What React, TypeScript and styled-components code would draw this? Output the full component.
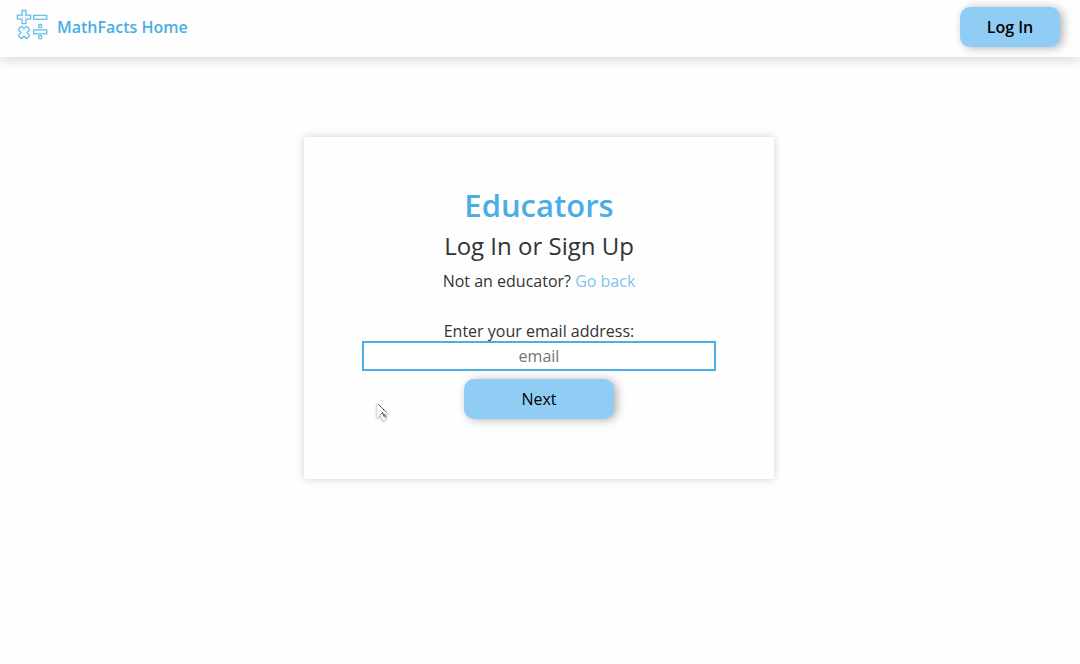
import React from "react";
import styled, { createGlobalStyle } from "styled-components";

const GlobalStyle = createGlobalStyle`
  * { box-sizing: border-box; }
  body {
    margin: 0;
    background: #fefefe;
    color: #333;
    font: 400 16px/24px "Open Sans", "Noto Sans", sans-serif;
  }
`;

const Header = styled.header`
  display: flex;
  align-items: center;
  justify-content: space-between;
  padding: 7px 20px 10px 16px;
  background: #fefefe;
  box-shadow: 0 4px 10px rgba(0, 0, 0, 0.14);
`;

const Brand = styled.a`
  display: flex;
  align-items: center;
  gap: 9px;
  color: #4aaee4;
  font-weight: 600;
  text-decoration: none;
`;

const Logo = styled.svg`
  width: 32px;
  height: 32px;
  margin-bottom: 4px;
  fill: #f2f9fd;
  stroke: #6bbdea;
  stroke-width: 1.3;
`;

const Button = styled.button<{ $width: number; $strong?: boolean }>`
  width: ${(p) => p.$width}px;
  height: 40px;
  padding: 0;
  border: 0;
  border-radius: 10px;
  background: #90cdf4;
  color: #000;
  font: inherit;
  font-weight: ${(p) => (p.$strong ? 600 : 400)};
  box-shadow: 3px 1px 10px rgba(0, 0, 0, 0.3);
  cursor: pointer;
`;

const Main = styled.main`
  display: flex;
  justify-content: center;
  padding: 80px 18px 80px 16px;
`;

const Card = styled.section`
  display: flex;
  flex-direction: column;
  align-items: center;
  width: 100%;
  max-width: 470px;
  padding: 44px 58px 60px;
  background: #fefefe;
  box-shadow: 0 0 8px rgba(0, 0, 0, 0.18);
  text-align: center;
`;

const Title = styled.h1`
  margin: 0;
  color: #4aaee4;
  font-size: 31px;
  line-height: 48px;
  font-weight: 600;
`;

const Subtitle = styled.h2`
  margin: 0;
  font-size: 24px;
  line-height: 34px;
  font-weight: 400;
`;

const Note = styled.p`
  margin: 6px 0 27px;
`;

const BackLink = styled.a`
  color: #80c4ea;
  text-decoration: none;
`;

const Form = styled.form`
  display: flex;
  flex-direction: column;
  align-items: center;
  width: 100%;
`;

const Label = styled.label`
  padding-top: 1px;
  line-height: 20px;
`;

const EmailInput = styled.input`
  width: 100%;
  height: 30px;
  margin: 0 0 8px;
  padding: 0;
  border: 2px solid #4aaee4;
  border-radius: 0;
  outline: 0;
  background: #fff;
  color: #333;
  font: inherit;
  text-align: center;

  &::placeholder {
    color: #757575;
    opacity: 1;
  }
`;

const Pointer = styled.svg`
  position: absolute;
  top: 402px;
  left: calc(50% - 164px);
  width: 14px;
  height: 20px;
  pointer-events: none;
  filter: drop-shadow(0 1px 1px rgba(0, 0, 0, 0.3));
`;

export default function App() {
  return (
    <>
      <GlobalStyle />
      <Header>
        <Brand href="#home">
          <Logo viewBox="0 0 32 32" aria-hidden="true">
            <path d="M6 1.500h4v4.600h4.600v4H10v4.600H6v-4.600H1.400v-4H6z" />
            <path d="M17.600 6.400h13.200v4H17.600z" />
            <path d="M4.600 17.800Q5.400 17 6.200 17.800L8 19.600l1.800-1.800Q10.600 17 11.400 17.800L13.200 19.600Q14 20.400 13.200 21.200L11 23.400l2.200 2.200Q14 26.400 13.200 27.200L11.400 29Q10.600 29.800 9.800 29L8 27.200l-1.800 1.800Q5.400 29.800 4.600 29L2.800 27.200Q2 26.400 2.800 25.600L5 23.400l-2.200-2.200Q2 20.400 2.800 19.600z" />
            <path d="M17.600 20.800h13.200v4H17.600z" />
            <circle cx="24.200" cy="17.200" r="1.700" />
            <circle cx="24.200" cy="28.200" r="1.700" />
          </Logo>
          MathFacts Home
        </Brand>
        <Button type="button" $width={100} $strong>Log In</Button>
      </Header>
      <Main>
        <Card>
          <Title>Educators</Title>
          <Subtitle>Log In or Sign Up</Subtitle>
          <Note>
            Not an educator? <BackLink href="#back">Go back</BackLink>
          </Note>
          <Form onSubmit={(e: React.FormEvent) => e.preventDefault()}>
            <Label htmlFor="email">Enter your email address:</Label>
            <EmailInput id="email" type="email" placeholder="email" />
            <Button type="submit" $width={150}>Next</Button>
          </Form>
        </Card>
      </Main>
      <Pointer viewBox="0 0 14 20" aria-hidden="true">
        <path d="M1 1v15l3.400-3 2.400 5.500 3-1.200-2.400-5.300h5z" fill="#fff" stroke="#ddd" strokeWidth=".6" />
        <path d="M2.500 2.500l8 8M4.500 12.500l2-2 4 5M6.500 11.500l2 4" fill="none" stroke="#222" strokeWidth="1" strokeDasharray="1.500 .6" />
      </Pointer>
    </>
  );
}
